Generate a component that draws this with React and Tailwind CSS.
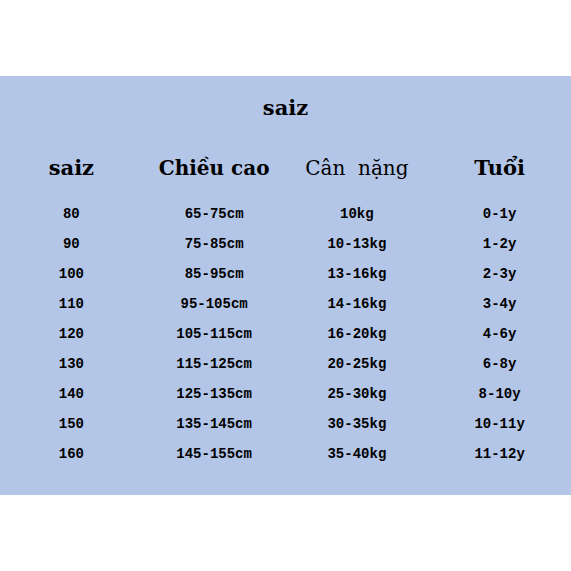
import React from 'react';

const rows = [
  ['80', '65-75cm', '10kg', '0-1y'],
  ['90', '75-85cm', '10-13kg', '1-2y'],
  ['100', '85-95cm', '13-16kg', '2-3y'],
  ['110', '95-105cm', '14-16kg', '3-4y'],
  ['120', '105-115cm', '16-20kg', '4-6y'],
  ['130', '115-125cm', '20-25kg', '6-8y'],
  ['140', '125-135cm', '25-30kg', '8-10y'],
  ['150', '135-145cm', '30-35kg', '10-11y'],
  ['160', '145-155cm', '35-40kg', '11-12y'],
];

const App = () => {
  return (
    <div className="w-[571px] h-[571px] bg-white pt-[76px]">
      <div className="h-[419px] bg-[#b4c6e7] pt-[18px] text-black">
        {/* tiêu đề */}
        <h1 className="text-center font-['DejaVu_Serif',serif] font-bold text-[21px] leading-[28px]">
          saiz
        </h1>

        {/* hàng tiêu đề cột */}
        <div className="grid grid-cols-4 mt-[32px] items-baseline font-['DejaVu_Serif',serif] leading-[28px]">
          <div className="text-center font-bold text-[21px]">saiz</div>
          <div className="text-center font-bold text-[20px]">Chiều cao</div>
          <div className="text-center text-[20px] whitespace-pre">Cân  nặng</div>
          <div className="text-center font-bold text-[21px]">Tuổi</div>
        </div>

        {/* bảng size */}
        <div className="mt-[17px] font-['Liberation_Mono',monospace] font-bold text-[14px] leading-[30px]">
          {rows.map((row) => (
            <div key={row[0]} className="grid grid-cols-4">
              {row.map((cell, i) => (
                <div key={i} className="text-center">
                  {cell}
                </div>
              ))}
            </div>
          ))}
        </div>
      </div>
    </div>
  );
};

export default App;
